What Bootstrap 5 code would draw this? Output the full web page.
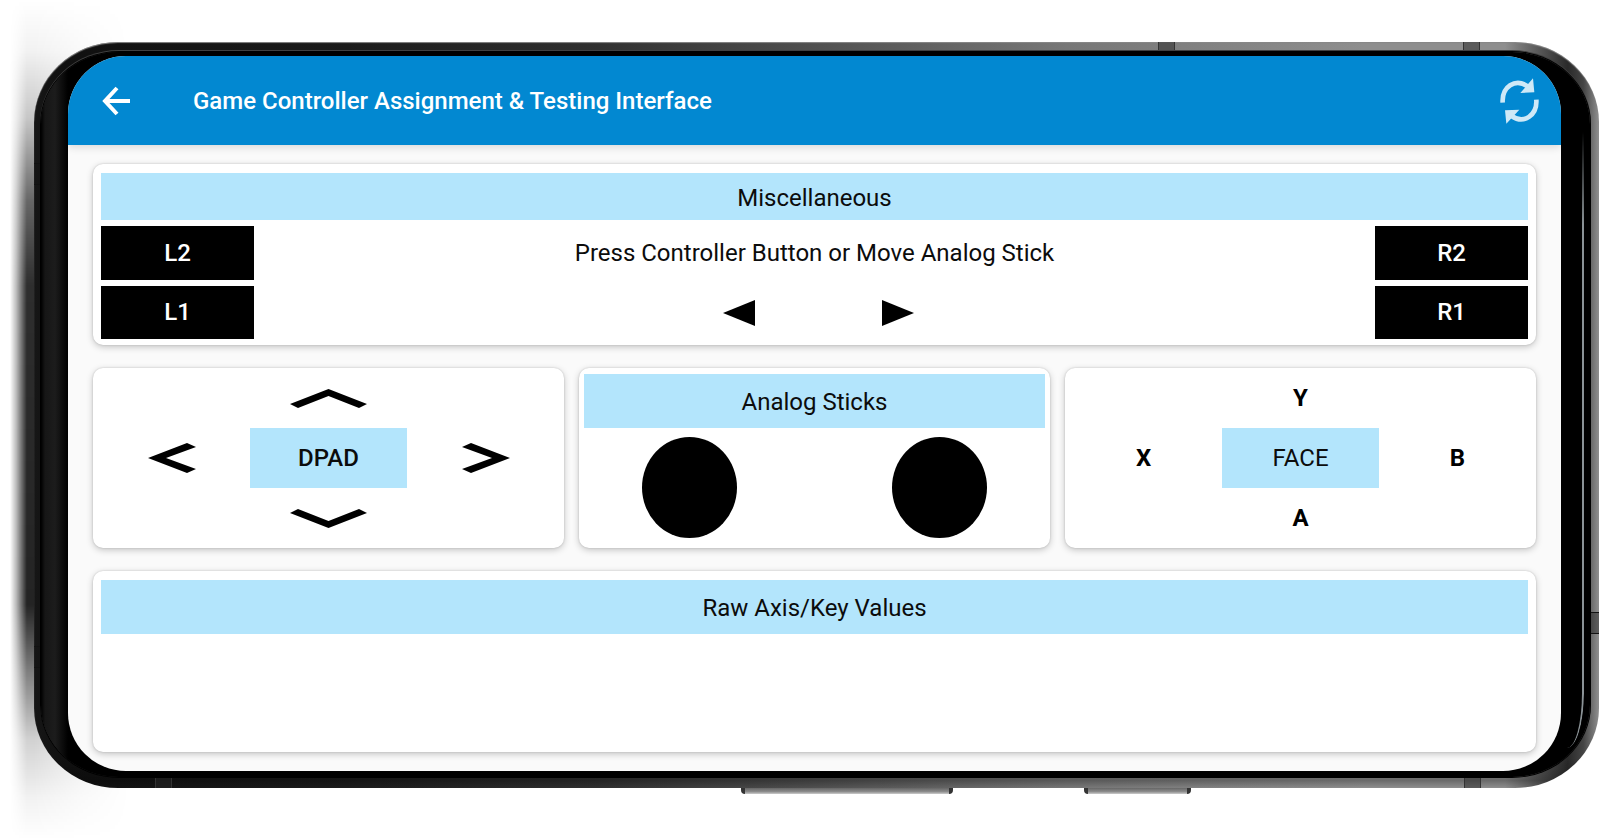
<!DOCTYPE html>
<html lang="en">
<head>
<meta charset="utf-8">
<meta name="viewport" content="width=device-width, initial-scale=1">
<title>Game Controller Assignment &amp; Testing Interface</title>
<link href="https://cdn.jsdelivr.net/npm/bootstrap@5.3.0/dist/css/bootstrap.min.css" rel="stylesheet">
<style>
  :root { --brand: #0288d1; --band: #b3e5fc; --ui-size: 24px; }
  body { font-family: Roboto, "Liberation Sans", sans-serif; font-size: var(--ui-size); line-height: 32px; color: #0c0c0c; background: #fff; }
  .stage { padding: 42px 1px 52px 34px; overflow: hidden; }
  /* soft shadow cast on the left of the handset */
  .stage::before {
    content: ""; position: absolute; top: 0; bottom: 0; left: 10px; width: 120px;
    background: linear-gradient(180deg, transparent, rgba(0,0,0,.05) 6%, rgba(0,0,0,.22) 14%, rgba(0,0,0,.6) 24%, rgba(0,0,0,.82) 34%, rgba(0,0,0,.86) 72%, rgba(0,0,0,.5) 80%, rgba(0,0,0,.18) 88%, rgba(0,0,0,.05) 95%, transparent);
    -webkit-mask-image: linear-gradient(90deg, transparent, rgba(0,0,0,.3) 5%, #000 14%, #000 20%, rgba(0,0,0,.4) 60%, transparent);
    mask-image: linear-gradient(90deg, transparent, rgba(0,0,0,.3) 5%, #000 14%, #000 20%, rgba(0,0,0,.4) 60%, transparent);
  }
  .handset {
    border-radius: 84px / 80px; padding: 10px 9px 11px 7px;
    background:
      linear-gradient(180deg, transparent 96%, rgba(0,0,0,.25) 99%, rgba(0,0,0,0)),
      linear-gradient(90deg, #161616, #101010 2%, #1b1b1b 20%, #303030 36%, #555 52%, #777 66%, #8e8e8e 85%, #8e8e8e 94%, #2a2a2a 98%, #444 99%, #909090);
    box-shadow: inset 0 1px 1px #888;
  }
  .bezel {
    border-radius: 78px / 72px; padding: 4px 29px 6px 27px;
    background: linear-gradient(90deg, #000, #161616 4px, #1c1c1c 14px, #000 27px, #000);
    box-shadow: 0 0 0 1px #000, 0 -1px 0 1px #404040;
  }
  .glint { top: 80px; bottom: 29px; right: 6px; width: 17px; border-right: 2px solid #8a9296; border-radius: 0 0 17px 0 / 0 0 55px 0; -webkit-mask-image: linear-gradient(180deg, transparent, #000 15%); mask-image: linear-gradient(180deg, transparent, #000 15%); }
  .screen { border-radius: 58px; background: #fafafa; }
  .app-bar { height: 89px; padding: 0 21px 0 34px; background: var(--brand); box-shadow: 0 2px 8px rgba(0,0,0,.14); }
  .app-bar h1 { margin: 0 0 0 62px; font-size: var(--ui-size); line-height: 32px; font-weight: 500; color: #fff; }
  .icon-btn { border: 0; padding: 0; background: none; display: flex; }
  .panels { padding: 19px 25px; gap: 23px; }
  .panel { flex: 1 1 0; min-height: 180px; background: #fff; border-radius: 10px; box-shadow: 0 2px 7px rgba(0,0,0,.22), 0 0 2px rgba(0,0,0,.18); }
  .panel-wide { padding: 9px 8px 6px; }
  .panel-row { display: grid; grid-template-columns: repeat(3, 1fr); flex: 1 1 0; min-height: 180px; gap: 15px; }
  .panel-sticks { padding: 6px 5px 5px; }
  .band { background: var(--band); font-size: var(--ui-size); line-height: 32px; font-weight: 400; text-align: center; margin: 0; }
  .band-s { padding: 9px 0 6px; }
  .band-m { padding: 12px 0 10px; }
  .misc-body { padding-top: 6px; }
  .message { height: 53px; }
  .shoulders { width: 153px; gap: 6px; }
  .shoulders button { flex: 1; border: 0; background: #000; color: #fff; font-weight: 500; padding: 0; }
  .pad-grid { display: grid; grid-template: repeat(3, 1fr) / repeat(3, 1fr); }
  .pad-grid > * { display: flex; align-items: center; justify-content: center; }
  .pad-grid button { border: 0; background: none; padding: 0; color: #000; font-weight: 700; }
  .pad-up { grid-area: 1 / 2; } .pad-left { grid-area: 2 / 1; } .pad-mid { grid-area: 2 / 2; }
  .pad-right { grid-area: 2 / 3; } .pad-down { grid-area: 3 / 2; }
  .pad-mid { background: var(--band); font-weight: 500; }
  .face .pad-mid { font-weight: 400; }
  .stick { width: 95px; height: 101px; border: 0; border-radius: 50%; background: #000; }
  .sticks { padding: 4px 58px 0; }
  .arrows { gap: 127px; padding-left: 8px; }
  .seam { background: rgba(40,40,40,.5); border: solid #333; border-width: 0 1px; width: 17px; height: 10px; }
  .seam-side { background: rgba(20,20,20,.4); border: solid #111; border-width: 1px 0; width: 8px; height: 22px; }
  .side-key { top: 100%; height: 6px; border-radius: 0 0 4px 4px; background: linear-gradient(#666, #8c8c8c 60%, #ccc); border: solid #333; border-width: 0 4px; }
</style>
</head>
<body>
<div class="stage position-relative d-flex min-vh-100">
  <div class="handset position-relative flex-grow-1 d-flex">
    <span class="seam position-absolute top-0" style="left:71.8%"></span>
    <span class="seam position-absolute top-0" style="left:91.3%"></span>
    <span class="seam position-absolute bottom-0" style="left:7.7%"></span>
    <span class="seam position-absolute bottom-0" style="left:91.4%"></span>
    <span class="seam-side position-absolute start-0" style="top:16.2%"></span>
    <span class="seam-side position-absolute start-0" style="top:81%"></span>
    <span class="seam-side position-absolute end-0" style="top:76.4%"></span>
    <span class="side-key position-absolute" style="left:45.2%;width:13.5%"></span>
    <span class="side-key position-absolute" style="left:67.1%;width:6.8%"></span>
    <div class="bezel position-relative flex-grow-1 d-flex">
      <span class="glint position-absolute"></span>
      <div class="screen position-relative flex-grow-1 d-flex flex-column overflow-hidden">
        <header class="app-bar d-flex align-items-center">
          <button class="icon-btn" type="button" aria-label="Back">
            <svg width="29" height="30" viewBox="0 0 29 30" fill="none" stroke="#fff" stroke-width="4"><path d="M15 2 3 15 15 28M3 15H28"/></svg>
          </button>
          <h1>Game Controller Assignment &amp; Testing Interface</h1>
          <button class="icon-btn ms-auto" type="button" aria-label="Refresh">
            <svg width="40" height="46" viewBox="60 52 120 138"><g fill="none" stroke="#cfe9f7" stroke-width="14"><path d="M68 126C65 78 106 51 143 77"/><path d="M169 117C172 163 132 192 95 166"/></g><path fill="#cfe9f7" d="M159 53 163 95 121 97ZM79 189 75 149 118 147Z"/></svg>
          </button>
        </header>
        <main class="panels flex-grow-1 d-flex flex-column">
          <section class="panel panel-wide d-flex flex-column">
            <h2 class="band band-s">Miscellaneous</h2>
            <div class="misc-body d-flex flex-grow-1">
              <div class="shoulders d-flex flex-column">
                <button type="button">L2</button>
                <button type="button">L1</button>
              </div>
              <div class="flex-grow-1 d-flex flex-column text-center">
                <div class="message d-flex align-items-center justify-content-center">Press Controller Button or Move Analog Stick</div>
                <div class="arrows flex-fill d-flex align-items-center justify-content-center pt-2">
                  <button class="icon-btn" type="button" aria-label="Select"><svg width="32" height="26" viewBox="0 0 32 26"><path d="M0 13 32 0V26Z"/></svg></button>
                  <button class="icon-btn" type="button" aria-label="Start"><svg width="32" height="26" viewBox="0 0 32 26"><path d="M32 13 0 0V26Z"/></svg></button>
                </div>
              </div>
              <div class="shoulders d-flex flex-column">
                <button type="button">R2</button>
                <button type="button">R1</button>
              </div>
            </div>
          </section>
          <div class="panel-row">
            <section class="panel pad-grid">
              <button class="pad-up" type="button" aria-label="Up"><svg width="77" height="19" viewBox="0 0 77 19"><path d="M0 15 38.500 0 77 15 69 19 38.500 7 8 19Z"/></svg></button>
              <button class="pad-left" type="button" aria-label="Left"><svg width="48" height="30" viewBox="0 0 48 30"><path d="M0 15 39 0 48 4 18 15 48 26 39 30Z"/></svg></button>
              <div class="pad-mid">DPAD</div>
              <button class="pad-right" type="button" aria-label="Right"><svg width="48" height="30" viewBox="0 0 48 30"><path d="M48 15 9 0 0 4 30 15 0 26 9 30Z"/></svg></button>
              <button class="pad-down" type="button" aria-label="Down"><svg width="77" height="19" viewBox="0 0 77 19"><path d="M0 4 38.500 19 77 4 69 0 38.500 12 8 0Z"/></svg></button>
            </section>
            <section class="panel panel-sticks d-flex flex-column">
              <h2 class="band band-m">Analog Sticks</h2>
              <div class="sticks flex-grow-1 d-flex align-items-center justify-content-between">
                <button class="stick" type="button" aria-label="Left stick"></button>
                <button class="stick" type="button" aria-label="Right stick"></button>
              </div>
            </section>
            <section class="panel pad-grid face">
              <button class="pad-up" type="button">Y</button>
              <button class="pad-left" type="button">X</button>
              <div class="pad-mid">FACE</div>
              <button class="pad-right" type="button">B</button>
              <button class="pad-down" type="button">A</button>
            </section>
          </div>
          <section class="panel panel-wide">
            <h2 class="band band-m">Raw Axis/Key Values</h2>
          </section>
        </main>
      </div>
    </div>
  </div>
</div>
<script src="https://cdn.jsdelivr.net/npm/bootstrap@5.3.0/dist/js/bootstrap.bundle.min.js"></script>
</body>
</html>
